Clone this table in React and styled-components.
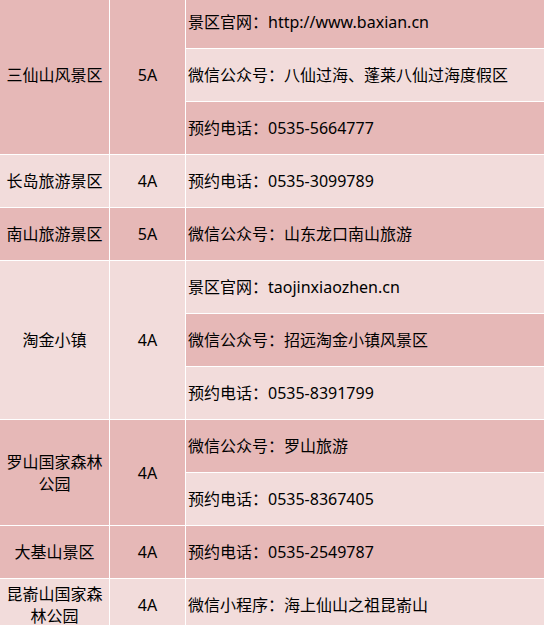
import styled, { createGlobalStyle } from "styled-components";

const Global = createGlobalStyle`
  html, body {
    margin: 0;
    padding: 0;
    background: #fff;
    overflow: hidden;
  }
`;

const DARK = "#e6b8b7";
const LIGHT = "#f2dcdb";

const Table = styled.table`
  border-collapse: separate;
  border-spacing: 0;
  margin-top: -4px;
  width: 640px;
  table-layout: fixed;
  font-family: "Noto Sans", "Noto Sans CJK SC", sans-serif;
  font-size: 16px;
  line-height: 22px;
  color: #000;
`;

const Cell = styled.td`
  background: ${(p) => (p.$dark ? DARK : LIGHT)};
  border-right: 1px solid #fff;
  border-bottom: 1px solid #fff;
  height: 52px;
  padding: 0 ${(p) => (p.$left ? "2px" : "4px")};
  text-align: ${(p) => (p.$left ? "left" : "center")};
  vertical-align: middle;
  white-space: ${(p) => (p.$left ? "nowrap" : "normal")};
`;

const spots = [
  {
    name: "三仙山风景区",
    level: "5A",
    dark: true,
    info: [
      ["景区官网：http://www.baxian.cn", true],
      ["微信公众号：八仙过海、蓬莱八仙过海度假区", false],
      ["预约电话：0535-5664777", true],
    ],
  },
  { name: "长岛旅游景区", level: "4A", dark: false, info: [["预约电话：0535-3099789", false]] },
  { name: "南山旅游景区", level: "5A", dark: true, info: [["微信公众号：山东龙口南山旅游", true]] },
  {
    name: "淘金小镇",
    level: "4A",
    dark: false,
    info: [
      ["景区官网：taojinxiaozhen.cn", false],
      ["微信公众号：招远淘金小镇风景区", true],
      ["预约电话：0535-8391799", false],
    ],
  },
  {
    name: "罗山国家森林公园",
    level: "4A",
    dark: true,
    info: [
      ["微信公众号：罗山旅游", true],
      ["预约电话：0535-8367405", false],
    ],
  },
  { name: "大基山景区", level: "4A", dark: true, info: [["预约电话：0535-2549787", true]] },
  { name: "昆嵛山国家森林公园", level: "4A", dark: false, info: [["微信小程序：海上仙山之祖昆嵛山", false]] },
];

export default function App() {
  return (
    <>
      <Global />
      <Table>
        <colgroup>
          <col style={{ width: 110 }} />
          <col style={{ width: 76 }} />
          <col />
        </colgroup>
        <tbody>
          {spots.map((s) =>
            s.info.map(([text, dark], i) => (
              <tr key={s.name + i}>
                {i === 0 && (
                  <>
                    <Cell $dark={s.dark} rowSpan={s.info.length}>
                      {s.name}
                    </Cell>
                    <Cell $dark={s.dark} rowSpan={s.info.length}>
                      {s.level}
                    </Cell>
                  </>
                )}
                <Cell $dark={dark} $left>
                  {text}
                </Cell>
              </tr>
            ))
          )}
        </tbody>
      </Table>
    </>
  );
}
